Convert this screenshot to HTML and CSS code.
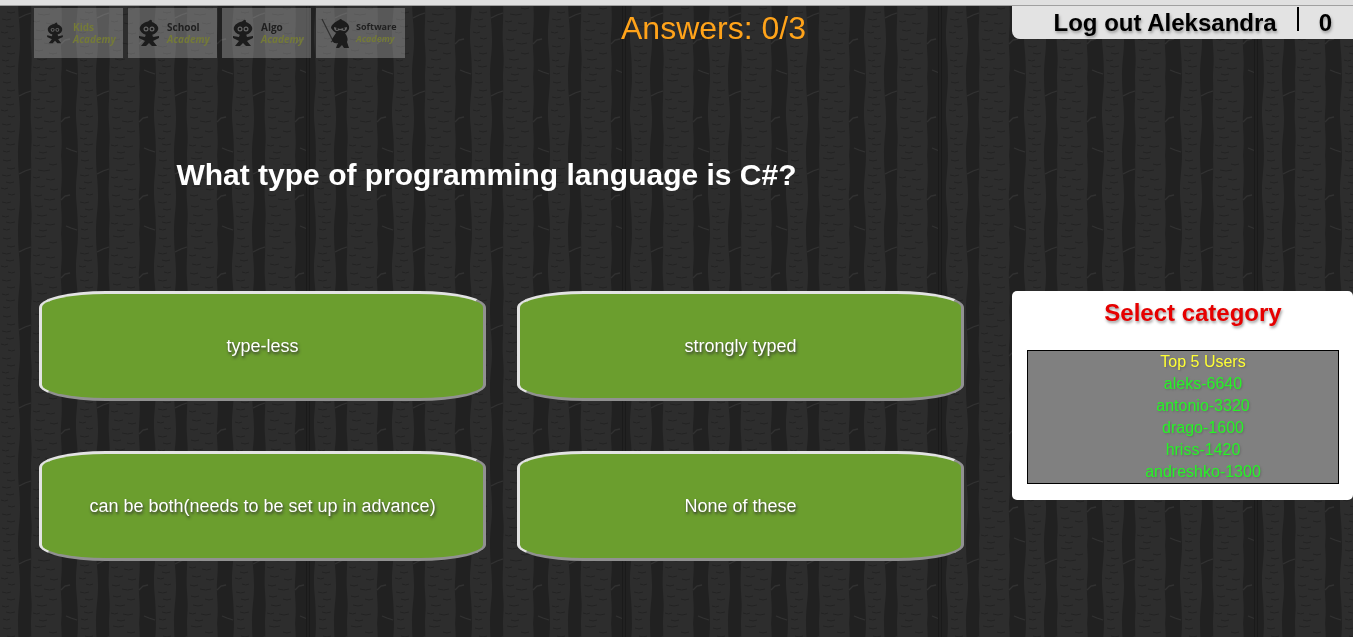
FILE: index.html
```
<!DOCTYPE html>
<html lang="en">
<head>
<meta charset="utf-8">
<title>Quiz</title>
<link rel="stylesheet" href="styles.css">
</head>
<body>
<svg class="forest" aria-hidden="true">
  <defs>
    <g id="trunks">
      <path fill="#2d2d2d" d="M10 0C10 14 8 22 8 36S10 52 10 78H28C28 60 30 56 30 40S28 20 28 0Z"/>
      <path fill="#2d2d2d" d="M41 0C42 20 40 30 41 46S42 60 41 78H71C73 60 70 50 71 36S72 16 71 0Z"/>
      <path stroke="#313131" stroke-width="1.3" fill="none" d="M29 19L35 16L41 14M71 45L75 41L80 40M76 71L81 73L87 75"/>
      <path stroke="#222" fill="none" d="M13 5q4 2 8 0M17 13q4 2 8 0M12 20q5 2 9 0M16 27q4 2 8 0M11 33q4 2 7 0M18 39q4 2 7 0M12 47q5 2 9 0M17 54q4 2 8 0M12 61q4 2 7 0M16 67q4 2 9 0M13 74q4 2 7 0M45 3q5 2 11 0M59 9q4 2 8 0M48 15q6 2 12 0M43 22q3 2 7 0M56 24q5 2 9 0M46 31q5 2 9 0M60 34q4 2 8 0M44 40q4 2 8 0M54 44q6 2 11 0M45 51q4 2 8 0M59 54q4 2 8 0M47 60q5 2 10 0M43 68q4 2 7 0M55 69q5 2 10 0M49 75q4 2 8 0"/>
    </g>
    <pattern id="woods" width="316" height="78" x="-10" y="77" patternUnits="userSpaceOnUse">
      <rect width="316" height="78" fill="#212121"/>
      <use href="#trunks"/>
      <use href="#trunks" x="78"/>
      <use href="#trunks" x="156"/>
      <use href="#trunks" x="234"/>
      <path stroke="#1a1a1a" d="M.5 0V78M3.5 0V78"/>
    </pattern>
    <g id="ninja">
      <path d="M13 1Q15 0 15 3C20 5 22 8 21 11Q19 16 12 16T3 11C2 8 4 5 9 3Q11 3 13 1Z"/>
      <path d="M9 15H15L16 18L22 17V19L16 22L20 27H15L12 24L9 27H4L8 22L2 19V17L8 18Z"/>
      <circle cx="9" cy="10" r="2.5" fill="#666"/><circle cx="15" cy="10" r="2.5" fill="#666"/>
      <circle cx="9" cy="10" r="1.3"/><circle cx="15" cy="10" r="1.3"/>
    </g>
  </defs>
  <rect width="100%" height="100%" fill="url(#woods)"/>
</svg>

<header class="header">
  <nav class="academies">
    <a class="academy kids" href="#"><svg class="mascot" viewBox="0 0 24 28"><use href="#ninja"/></svg><span class="name"><b>Kids</b><i>Academy</i></span></a>
    <a class="academy" href="#"><svg class="mascot" viewBox="0 0 24 28"><use href="#ninja"/></svg><span class="name"><b>School</b><i>Academy</i></span></a>
    <a class="academy" href="#"><svg class="mascot" viewBox="0 0 24 28"><use href="#ninja"/></svg><span class="name"><b>Algo</b><i>Academy</i></span></a>
    <a class="academy software" href="#"><svg class="mascot wide" viewBox="0 0 32 30"><path stroke="#303030" stroke-width="1.2" d="M4 1L15 23M13 24L17 21"/><path d="M21 2Q23 0 24 2C29 4 32 7 31 11Q29 16 23 16T13 10C13 7 17 4 21 2ZM18 15H27Q31 21 29 24L31 30H26L24 27L21 30H18L20 25Q14 26 14 21Z"/><path fill="#666" d="M16 9L22 11L29 9Q29 13 26 13L22 12L19 13Q16 13 16 9Z"/><circle cx="19" cy="11" r="1"/><circle cx="26" cy="11" r="1"/></svg><span class="name"><b>Software</b><i>Academy</i></span></a>
  </nav>
  <div class="answers">Answers: 0/3</div>
  <div class="account"><a class="logout" href="#">Log out Aleksandra</a><span class="score">0</span></div>
</header>

<main class="quiz">
  <h1 class="question">What type of programming language is C#?</h1>
  <div class="options">
    <button class="option" type="button">type-less</button>
    <button class="option" type="button">strongly typed</button>
    <button class="option" type="button">can be both(needs to be set up in advance)</button>
    <button class="option" type="button">None of these</button>
  </div>
  <aside class="sidebar">
    <h2 class="category"><a href="#">Select category</a></h2>
    <ul class="top-users">
      <li class="heading">Top 5 Users</li>
      <li>aleks-6640</li>
      <li>antonio-3320</li>
      <li>drago-1600</li>
      <li>hriss-1420</li>
      <li>andreshko-1300</li>
    </ul>
  </aside>
</main>
</body>
</html>
```

FILE: styles.css
```
* { box-sizing: border-box; }

body {
  margin: 0;
  border-top: 5px solid #e0e0e0;
  background: #212121;
  font-family: "Liberation Sans", Arial, sans-serif;
  font-size: 16px;
}

a { color: inherit; text-decoration: none; }

.forest {
  position: fixed;
  inset: 0;
  z-index: -1;
  width: 100%;
  height: 100%;
}

.header {
  display: grid;
  grid-template-columns: auto 1fr 341px;
  align-items: start;
  border-top: 1px solid #a0a0a0;
  padding-left: 34px;
}

.academies { display: flex; gap: 5px; padding-top: 2px; }

.academy {
  display: flex;
  align-items: center;
  gap: 6px;
  width: 89px;
  height: 50px;
  padding-left: 9px;
  background: rgba(255, 255, 255, .25);
  font-family: "Open Sans", sans-serif;
  font-size: 10px;
  line-height: 12px;
  color: #202020;
}

.mascot { flex: none; width: 24px; height: 28px; fill: #1c1c1c; }
.kids .mascot { height: 22px; }
.mascot.wide { width: 32px; height: 30px; }
.software { padding-left: 2px; font-size: 9px; }
.name { display: flex; flex-direction: column; }
.name b { font-weight: 700; }
.name i { color: #747a38; font-weight: 700; }
.kids b { color: #747a38; }

.answers {
  padding: 4px 0 0 10px;
  color: #ffa31a;
  font-size: 32px;
  line-height: 36px;
  text-align: center;
}

.account {
  display: flex;
  justify-content: flex-end;
  height: 33px;
  padding: 1px 21px 0 0;
  border-bottom-left-radius: 8px;
  background: #e3e3e3;
  color: #000;
  font-size: 24px;
  font-weight: bold;
  line-height: 32px;
  text-shadow: 1px 2px 3px #999;
}

.logout { height: 24px; padding-right: 20px; border-right: 2px solid #000; }
.score { padding-left: 20px; }

.quiz {
  display: grid;
  grid-template-columns: 1fr 341px;
  column-gap: 48px;
  padding-left: 39px;
}

.question {
  grid-column: 1;
  margin: 99px 0 98px;
  padding-right: 30px;
  color: #fff;
  font-size: 30px;
  line-height: 36px;
  text-align: center;
}

.options {
  grid-column: 1;
  display: grid;
  grid-template-columns: 1fr 1fr;
  gap: 50px 31px;
}

.option {
  height: 110px;
  border: 3px solid;
  border-color: #e3e3e3 #919191 #919191 #e3e3e3;
  border-radius: 15%;
  background: #6b9e2e;
  color: #fff;
  font: 18px "Liberation Sans", Arial, sans-serif;
  text-shadow: 1px 2px 3px #333;
}

.sidebar {
  grid-column: 2;
  align-self: start;
  padding: 4px 14px 16px 15px;
  border-radius: 5px;
  background: #fff;
}

.category {
  margin: 0 0 19px;
  padding-left: 20px;
  color: #e60000;
  font-size: 24px;
  line-height: 36px;
  text-align: center;
  text-shadow: 1px 2px 3px #999;
}

.top-users {
  margin: 0;
  padding: 0 0 0 40px;
  border: 1px solid #000;
  background: #808080;
  color: #27f227;
  line-height: 22px;
  list-style: none;
  text-align: center;
  text-shadow: 1px 1px 2px #666;
}

.heading { color: #ffff33; }
```
